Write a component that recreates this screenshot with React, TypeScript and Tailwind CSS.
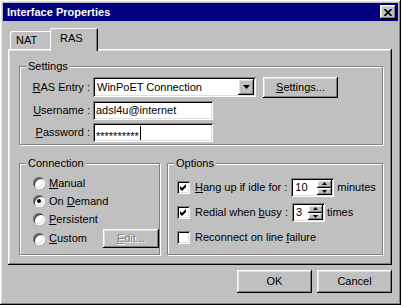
import React from 'react';

// classic 3d borders
const raised =
  'bg-[#c0c0c0] shadow-[inset_-1px_-1px_#000,inset_1px_1px_#fff,inset_-2px_-2px_#808080,inset_2px_2px_#dfdfdf]';
const sunken =
  'bg-white shadow-[inset_1px_1px_#808080,inset_-1px_-1px_#fff,inset_2px_2px_#000,inset_-2px_-2px_#dfdfdf]';
const etched = 'relative border border-[#808080] shadow-[1px_1px_0_#fff,inset_1px_1px_0_#fff]';
const tab = 'bg-[#c0c0c0] rounded-t-[2px] shadow-[inset_1px_1px_#fff,inset_-1px_0_#000,inset_-2px_0_#808080]';

const Group = ({ label, className, children }: { label: string; className: string; children: React.ReactNode }) => (
  <div className={`${etched} ${className}`}>
    <span className="absolute left-[6px] -top-[7px] px-[2px] bg-[#c0c0c0] leading-[13px]">{label}</span>
    {children}
  </div>
);

const Radio = ({ checked }: { checked?: boolean }) => (
  <span className="w-[12px] h-[12px] rounded-full bg-white flex items-center justify-center shrink-0 shadow-[inset_1px_1px_#808080,inset_-1px_-1px_#fff,inset_2px_2px_#404040,inset_-2px_-2px_#dfdfdf]">
    {checked && <span className="w-[4px] h-[4px] rounded-full bg-black" />}
  </span>
);

const Check = ({ checked }: { checked?: boolean }) => (
  <span className={`w-[13px] h-[13px] shrink-0 flex ${sunken}`}>
    {checked && (
      <svg width="13" height="13" viewBox="0 0 13 13">
        <path d="M3 5 L5 7 L9 3 L9 6 L5 10 L3 8 Z" fill="#000" />
      </svg>
    )}
  </span>
);

const Spin = ({ value, w }: { value: string; w: string }) => (
  <div className={`flex h-[19px] p-[2px] ${sunken} ${w}`}>
    <span className="flex-1 pl-[2px] leading-[15px]">{value}</span>
    <div className="flex flex-col w-[15px]">
      <div className={`h-[8px] flex items-center justify-center ${raised}`}>
        <svg width="5" height="3" viewBox="0 0 5 3">
          <path d="M2.5 0 L5 3 L0 3 Z" fill="#000" />
        </svg>
      </div>
      <div className={`h-[7px] flex items-center justify-center ${raised}`}>
        <svg width="5" height="3" viewBox="0 0 5 3">
          <path d="M0 0 L5 0 L2.5 3 Z" fill="#000" />
        </svg>
      </div>
    </div>
  </div>
);

export default function App() {
  return (
    <div
      className={`w-[401px] h-[305px] p-[3px] flex flex-col text-black text-[11px] font-['Liberation_Sans',Arial,sans-serif] ${raised}`}
    >
      {/* title bar */}
      <div className="h-[18px] bg-[#000080] flex items-center justify-between pl-[4px] pr-[2px]">
        <span className="text-white font-bold text-[11px] leading-[18px]">Interface Properties</span>
        <div className={`w-[16px] h-[14px] flex items-center justify-center ${raised}`}>
          <svg width="8" height="7" viewBox="0 0 8 7">
            <path d="M0.5 0 L7.5 7 M7.5 0 L0.5 7" stroke="#000" strokeWidth="1.7" />
          </svg>
        </div>
      </div>

      <div className="pl-[5px] flex flex-col">
        {/* tabs */}
        <div className="mt-[7px] h-[21px] flex items-end">
          <div className={`ml-[2px] w-[42px] h-[18px] pl-[6px] leading-[18px] ${tab}`}>NAT</div>
          <div className={`relative z-10 -ml-[2px] -mb-[2px] w-[48px] h-[23px] pl-[10px] pt-[3px] leading-[15px] ${tab}`}>
            RAS
          </div>
        </div>

        {/* tab panel */}
        <div className={`w-[384px] h-[216px] pl-[11px] pt-[17px] flex flex-col ${raised}`}>
          <Group label="Settings" className="w-[364px] h-[79px] pt-[10px] flex flex-col">
            <div className="flex items-start">
              <span className="w-[70px] text-right leading-[20px]">
                <u>R</u>AS Entry :
              </span>
              <div className={`ml-[3px] w-[163px] h-[20px] flex p-[2px] ${sunken}`}>
                <span className="flex-1 pl-[2px] leading-[16px]">WinPoET Connection</span>
                <div className={`w-[16px] h-[16px] flex items-center justify-center ${raised}`}>
                  <svg width="7" height="4" viewBox="0 0 7 4">
                    <path d="M0 0 L7 0 L3.5 4 Z" fill="#000" />
                  </svg>
                </div>
              </div>
              <div className={`ml-[7px] w-[75px] h-[21px] flex items-center justify-center ${raised}`}>
                <span>
                  <u>S</u>ettings...
                </span>
              </div>
            </div>
            <div className="flex items-start mt-[3px]">
              <span className="w-[70px] text-right leading-[19px]">
                <u>U</u>sername :
              </span>
              <div className={`ml-[3px] w-[120px] h-[19px] pl-[3px] leading-[19px] ${sunken}`}>adsl4u@internet</div>
            </div>
            <div className="flex items-start mt-[3px]">
              <span className="w-[70px] text-right leading-[19px]">
                <u>P</u>assword :
              </span>
              <div className={`ml-[3px] w-[120px] h-[19px] pl-[3px] flex items-center ${sunken}`}>
                <span className="relative top-[3px] text-[11px] leading-[10px]">**********</span>
                <span className="w-[1px] h-[14px] bg-black ml-[1px]" />
              </div>
            </div>
          </Group>

          <div className="mt-[18px] flex gap-[7px]">
            <Group label="Connection" className="w-[141px] h-[92px] pt-[10px] pl-[13px] flex flex-col">
              <div className="h-[18px] flex items-center gap-[4px]">
                <Radio />
                <span>
                  <u>M</u>anual
                </span>
              </div>
              <div className="h-[18px] flex items-center gap-[4px]">
                <Radio checked />
                <span>
                  On <u>D</u>emand
                </span>
              </div>
              <div className="h-[18px] flex items-center gap-[4px]">
                <Radio />
                <span>
                  <u>P</u>ersistent
                </span>
              </div>
              <div className="h-[21px] flex items-center gap-[4px]">
                <Radio />
                <span>
                  <u>C</u>ustom
                </span>
                <div
                  className={`ml-[12px] w-[59px] h-[19px] flex items-center justify-center text-[#808080] [text-shadow:1px_1px_0_#fff] ${raised}`}
                >
                  <span>
                    <u>E</u>dit...
                  </span>
                </div>
              </div>
            </Group>

            <Group label="Options" className="w-[216px] h-[92px] pt-[13px] pl-[9px] flex flex-col">
              <div className="h-[20px] flex items-center">
                <Check checked />
                <span className="ml-[5px]">
                  <u>H</u>ang up if idle for :
                </span>
                <Spin value="10" w="w-[43px] ml-[4px]" />
                <span className="ml-[3px]">minutes</span>
              </div>
              <div className="h-[20px] mt-[5px] flex items-center">
                <Check checked />
                <span className="ml-[5px]">
                  Redial when <u>b</u>usy :
                </span>
                <Spin value="3" w="w-[33px] ml-[4px]" />
                <span className="ml-[2px]">times</span>
              </div>
              <div className="h-[20px] mt-[5px] flex items-center">
                <Check />
                <span className="ml-[5px]">
                  Reconnect on line <u>f</u>ailure
                </span>
              </div>
            </Group>
          </div>
        </div>

        {/* dialog buttons */}
        <div className="w-[384px] mt-[5px] flex justify-end gap-[5px]">
          <div className={`w-[75px] h-[23px] flex items-center justify-center ${raised}`}>OK</div>
          <div className={`w-[75px] h-[23px] flex items-center justify-center ${raised}`}>Cancel</div>
        </div>
      </div>
    </div>
  );
}
